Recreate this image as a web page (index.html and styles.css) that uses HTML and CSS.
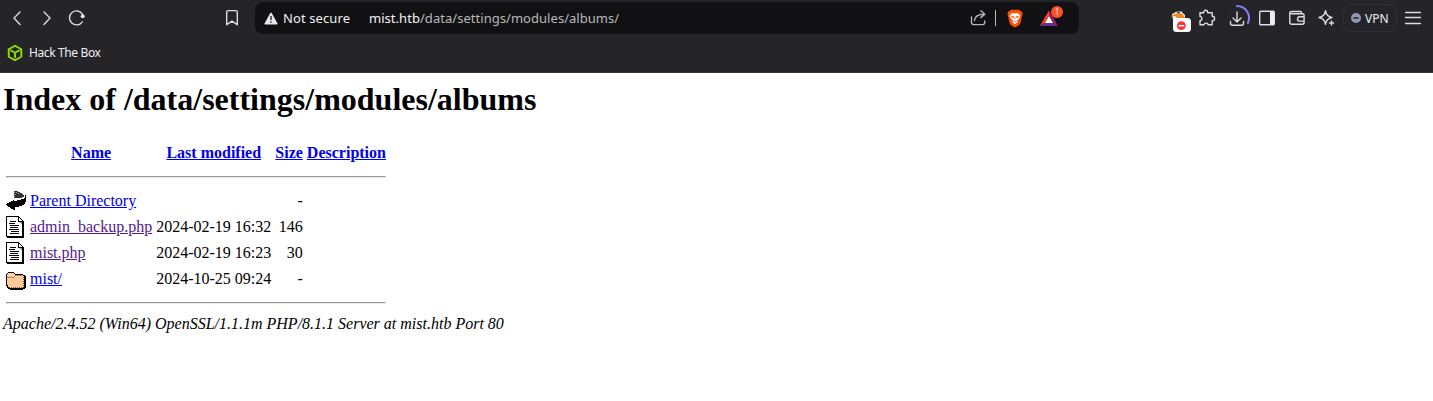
FILE: index.html
```html
<!DOCTYPE html>
<html lang="en">
<head>
<meta charset="utf-8">
<title>Index of /data/settings/modules/albums</title>
<link rel="stylesheet" href="styles.css">
</head>
<body>
<header class="browser">
  <div class="toolbar">
    <nav class="nav">
      <svg class="icon" width="16" height="20" viewBox="0 0 16 20"><path d="M11 4 5 10l6 6.500"/></svg>
      <svg class="icon" width="16" height="20" viewBox="0 0 16 20"><path d="m5 4 6 6-6 6.500"/></svg>
      <svg class="icon reload" width="18" height="20" viewBox="0 0 18 20"><path d="M14.500 6.300A7 7 0 1 0 14.300 13.800"/><circle cx="14.700" cy="8.200" r="2" fill="#e8e8ea" stroke="none"/></svg>
      <svg class="icon bookmark" width="14" height="20" viewBox="0 0 14 20"><path d="M1.700 16.700V4q0-1.400 1.400-1.400h7.800q1.400 0 1.400 1.400v12.700L7 13.200z"/></svg>
    </nav>
    <div class="address-bar">
      <svg class="warning" width="14" height="13" viewBox="0 0 14 13"><path d="M7 1.500 12.800 11.800H1.200z" fill="#e8e8ea" stroke="#e8e8ea" stroke-width="1.600" stroke-linejoin="round"/><path d="M7 4v4M7 9.200v1.600" stroke="#333438" stroke-width="1.500"/></svg>
      <span class="security">Not secure</span>
      <span class="url"><b>mist.htb</b>/data/settings/modules/albums/</span>
      <svg class="icon share" width="17" height="18" viewBox="0 0 17 18"><path d="M1.500 8v5.600q0 2 2 2h9.200q2 0 2-2V12M4.500 11.500c.2-4.200 3.300-6.300 10-6.300M10.800 1.800l4 3.400-4 3.400"/></svg>
      <i class="divider"></i>
      <svg class="lion" width="16" height="19" viewBox="0 0 16 19"><path d="M4 .7h8l1.500 1.600 1.300 0 .8 2.700-.5 1.400-1.600 7.300q-.5 1.600-2 2.700L8 18.500l-3.500-2.100q-1.500-1.100-2-2.700L.9 6.400.4 5l.8-2.700h1.300z" fill="#ff5000"/><path d="m5 4 3 .6L11 4l2.300 2.800-1.500 3.300-2 1.500 1 1.600L8 15l-2.800-1.800 1-1.600-2-1.500-1.500-3.300z" fill="#fff"/><path d="m4.500 7 2.200.7L6 9zM11.500 7l-2.200.7L10 9zM6.500 12.500h3M8 8v2.500" fill="#ff5000" stroke="#ff5000" stroke-width=".7"/></svg>
      <span class="rewards">
        <svg width="18" height="17" viewBox="0 0 18 17"><path d="M9 .5v5.300L5 12.500 0 16z" fill="#ff4724"/><path d="m9 .5 9 15.500-5-3.500L9 5.800z" fill="#9e1f63"/><path d="M0 16l5-3.500h8l5 3.500z" fill="#662d91"/><path d="m9 6 4 7H5z" fill="#fff"/></svg>
        <span class="badge">1</span>
      </span>
    </div>
    <div class="actions">
      <svg class="extension" width="24" height="24" viewBox="0 0 24 24"><path d="M4 6q2-2.500 6-2.500h4l3 3.500v5H5z" fill="#eee"/><path d="m2.500 8.500 4-2.500 4-1 4 1 2.500 4H9L7 8z" fill="#ef8a20"/><path d="m5 5 2-1m2 0 3 1m2-1 3 2" stroke="#222" stroke-width="1"/><path d="m5 12 1-3.500 3 1.500z" fill="#eee"/><rect x="5" y="10" width="18" height="14" rx="3.500" fill="#fff"/><circle cx="13.300" cy="17.700" r="4.400" fill="#fa3538"/><path d="M10.500 17.700h5.600" stroke="#fff" stroke-width="1.500"/></svg>
      <svg class="icon puzzle" width="18" height="18" viewBox="0 0 18 18"><path d="M2 3.700h3.700q0-2.500 2-2.500t2 2.500h4.500v3.500q2.400 0 2.400 2.200t-2.400 2.200v4.100h-4.100q-.1-1.600-2-1.600t-2.100 1.600H2v-4q1.900-.1 1.900-2.100T2 7.400z"/></svg>
      <svg class="icon download" width="26" height="26" viewBox="0 0 26 26"><circle cx="13" cy="13" r="12" stroke="#212126"/><path d="M13 1a12 12 0 0 1 10.900 17" stroke="#8581f5" stroke-width="2"/><path d="M13 7v10m-4-4 4 4 4-4M6.500 16.500v1.700q0 2 2 2h9q2 0 2-2v-1.700"/></svg>
      <svg class="icon sidebar" width="16" height="16" viewBox="0 0 16 16"><rect x=".7" y="1.200" width="14.600" height="13.500" rx="1"/><path d="M11 1.500h4v13h-4z" fill="#eee" stroke="none"/></svg>
      <svg class="icon wallet" width="16" height="16" viewBox="0 0 16 16"><path d="M12.500 3.500v-1q0-1-1-1H2.600Q.8 1.500.8 3v9.300q0 2 2 2h10.500q1.800 0 1.800-1.800V5.300q0-1.600-1.600-1.600H2.500Q.8 3.700.8 2.500M15 6.700h-4.200q-2.300 0-2.300 2.200t2.300 2.200H15"/></svg>
      <svg class="icon sparkle" width="17" height="18" viewBox="0 0 17 18"><path d="M7.500 1.700Q8.300 7.500 14 8.500 8.300 9.500 7.500 15.300 6.700 9.500 1 8.500 6.700 7.500 7.500 1.700z"/><path d="M13.500 12v4M11.500 14h4"/></svg>
      <span class="vpn"><svg width="10" height="10" viewBox="0 0 10 10"><circle cx="5" cy="5" r="5" fill="#9296b2"/><path d="M2.400 5h5.200" stroke="#222327" stroke-width="1.500"/></svg>VPN</span>
      <svg class="icon menu" width="16" height="14" viewBox="0 0 16 14"><path d="M.5 1.500h15M.5 6.500h15M.5 12.500h15"/></svg>
    </div>
  </div>
  <div class="bookmarks">
    <svg width="16" height="18" viewBox="0 0 16 18"><path d="M8 1.700 14.300 5.300v7.400L8 16.300 1.700 12.700V5.300zM4 6.500l4 2.300 4-2.300M8 8.800v4.500" fill="none" stroke="#91e000" stroke-width="1.900" stroke-linejoin="round" stroke-linecap="round"/></svg>
    <span>Hack The Box</span>
  </div>
</header>
<main class="page">
  <h1 class="title">Index of /data/settings/modules/albums</h1>
  <table class="listing">
    <tr><th class="icon-cell"></th><th><a href="#">Name</a></th><th><a href="#">Last modified</a></th><th><a href="#">Size</a></th><th><a href="#">Description</a></th></tr>
    <tr><th colspan="5"><hr></th></tr>
    <tr>
      <td class="icon-cell"><svg width="20" height="22" viewBox="0 0 20 22" shape-rendering="crispEdges"><path d="M8 1h4v1h2v1h2v1h1v1h1v2h-2v1H8z" fill="#333"/><path d="M8 2.500h1M10 2.500h1M9 4.500h1M8 6.500h1M12 3.500h1" stroke="#aaa"/><path d="M19 5h1v7h-1v2h-1v1h-2v1h-3v1H9v3H7v-1H5v-1H4v-1H2v-1H1v-1H0v-1h1v-1h2v-1h2v-1h2v-1h1v1h3v-1h4V9h3V8h1z" fill="#000"/></svg></td>
      <td><a href="#">Parent Directory</a></td><td></td><td class="size">-</td><td></td>
    </tr>
    <tr>
      <td class="icon-cell"><svg width="20" height="22" viewBox="0 0 20 22" shape-rendering="crispEdges"><path d="M0 0h13v1h1v1h1v1h1v1h1v1h1v17H1v-1H0z" fill="#000"/><path d="M1 1h11v5h4v14H1z" fill="#fff"/><path d="M13 2h1v1h1v1h1v1h-3z" fill="#fff"/><path d="M14 6h2v2h-1V7h-1z" fill="#888"/><path d="M4 5.500h6M3 7.500h6M4 9.500h9M4 11.500h8M3 13.500h10M5 15.500h8M4 17.500h9" stroke="#000"/></svg></td>
      <td><a class="visited" href="#">admin_backup.php</a></td><td>2024-02-19 16:32</td><td class="size">146</td><td></td>
    </tr>
    <tr>
      <td class="icon-cell"><svg width="20" height="22" viewBox="0 0 20 22" shape-rendering="crispEdges"><path d="M0 0h13v1h1v1h1v1h1v1h1v1h1v17H1v-1H0z" fill="#000"/><path d="M1 1h11v5h4v14H1z" fill="#fff"/><path d="M13 2h1v1h1v1h1v1h-3z" fill="#fff"/><path d="M14 6h2v2h-1V7h-1z" fill="#888"/><path d="M4 5.500h6M3 7.500h6M4 9.500h9M4 11.500h8M3 13.500h10M5 15.500h8M4 17.500h9" stroke="#000"/></svg></td>
      <td><a class="visited" href="#">mist.php</a></td><td>2024-02-19 16:23</td><td class="size">30</td><td></td>
    </tr>
    <tr>
      <td class="icon-cell"><svg width="20" height="22" viewBox="0 0 20 22" shape-rendering="crispEdges"><path d="M2 4h6v1h1v1h8v1h2v1h1v12h-1v1h-2v1H4v-1H2v-1H1v-2H0V6h1V5h1z" fill="#000"/><path d="M2 5h6v1h1v1h8v1h1v11h-1v1H3v-1H2v-2H1V6h1z" fill="#fc9"/><path d="M1 9.500h7M8 8.500h1M9 7.500h7" stroke="#b98350"/><path d="M2 6.500h6" stroke="#ffe2c6"/><path d="M3 19.500h14M17.500 9v10" fill="none" stroke="#865d34" stroke-dasharray="1 1"/></svg></td>
      <td><a href="#">mist/</a></td><td>2024-10-25 09:24</td><td class="size">-</td><td></td>
    </tr>
    <tr><th colspan="5"><hr></th></tr>
  </table>
  <address>Apache/2.4.52 (Win64) OpenSSL/1.1.1m PHP/8.1.1 Server at mist.htb Port 80</address>
</main>
</body>
</html>
```
FILE: styles.css
```css
body {
  margin: 0;
  background: #fff;
  color: #000;
  font-family: "Liberation Serif", "Times New Roman", serif;
  font-size: 16px;
}
.browser {
  box-sizing: border-box;
  height: 73px;
  background: #242429;
  border-bottom: 1px solid #39393d;
  color: #f0f0f2;
  font-family: "Noto Sans", "Open Sans", sans-serif;
}
.toolbar { display: flex; height: 36px; align-items: center; }
.icon { fill: none; stroke: #dcdcdf; stroke-width: 1.4; stroke-linecap: round; stroke-linejoin: round; }
.nav { display: flex; align-items: center; width: 246px; padding-left: 9px; gap: 14px; }
.reload { margin-left: -1px; }
.bookmark { margin-left: 125px; }
.address-bar {
  box-sizing: border-box;
  display: flex;
  align-items: center;
  width: 824px;
  height: 32px;
  padding: 0 21px 0 9px;
  border-radius: 8px;
  background: #111113;
  font-size: 13px;
}
.security { width: 67px; margin-left: 5px; letter-spacing: .1px; white-space: nowrap; }
.url { width: 252px; margin-left: 19px; color: #b9b9bd; letter-spacing: .04px; white-space: nowrap; }
.url b { color: #f2f2f4; font-weight: 400; }
.share { margin-left: auto; stroke: #b5b5b8; }
.divider { width: 1px; height: 16px; margin: 0 11px 0 8px; background: #bbb; }
.lion { margin-right: 17px; }
.rewards { position: relative; display: flex; }
.badge {
  position: absolute;
  top: -4px;
  left: 11px;
  width: 12px;
  height: 12px;
  border-radius: 50%;
  background: #ff502e;
  font-size: 8px;
  line-height: 12px;
  text-align: center;
}
.actions { display: flex; align-items: center; margin-left: 89px; }
.extension { margin-top: 4px; }
.puzzle { margin-left: 6px; }
.download { margin-left: 8px; }
.sidebar { margin-left: 9px; }
.wallet { margin-left: 14px; }
.sparkle { margin-left: 13px; }
.vpn {
  box-sizing: border-box;
  display: flex;
  align-items: center;
  gap: 4px;
  width: 54px;
  height: 28px;
  margin-left: 8px;
  padding-left: 7px;
  border: 1px solid #303035;
  border-radius: 8px;
  font-size: 12px;
}
.menu { margin-left: 8px; }
.bookmarks { display: flex; align-items: center; gap: 6px; height: 34px; padding-left: 7px; font-size: 12px; letter-spacing: -.38px; }
.bookmarks span { margin-top: -1px; }
.page { padding: 8px 3px 0; }
.title { margin: 0 0 21px; font-size: 32px; line-height: 37px; }
.listing { border-spacing: 2px; line-height: 18px; }
.listing th, .listing td { padding: 1px; white-space: nowrap; }
.listing td { text-align: left; }
.listing .size { text-align: right; }
.listing .icon-cell { width: 20px; height: 22px; }
.icon-cell svg { display: block; }
hr { margin: 8px 0; border: 1px solid; border-color: #9a9a9a #eee #eee #9a9a9a; }
a { color: #00e; }
a.visited { color: #551a8b; }
address { line-height: 18px; }
```
